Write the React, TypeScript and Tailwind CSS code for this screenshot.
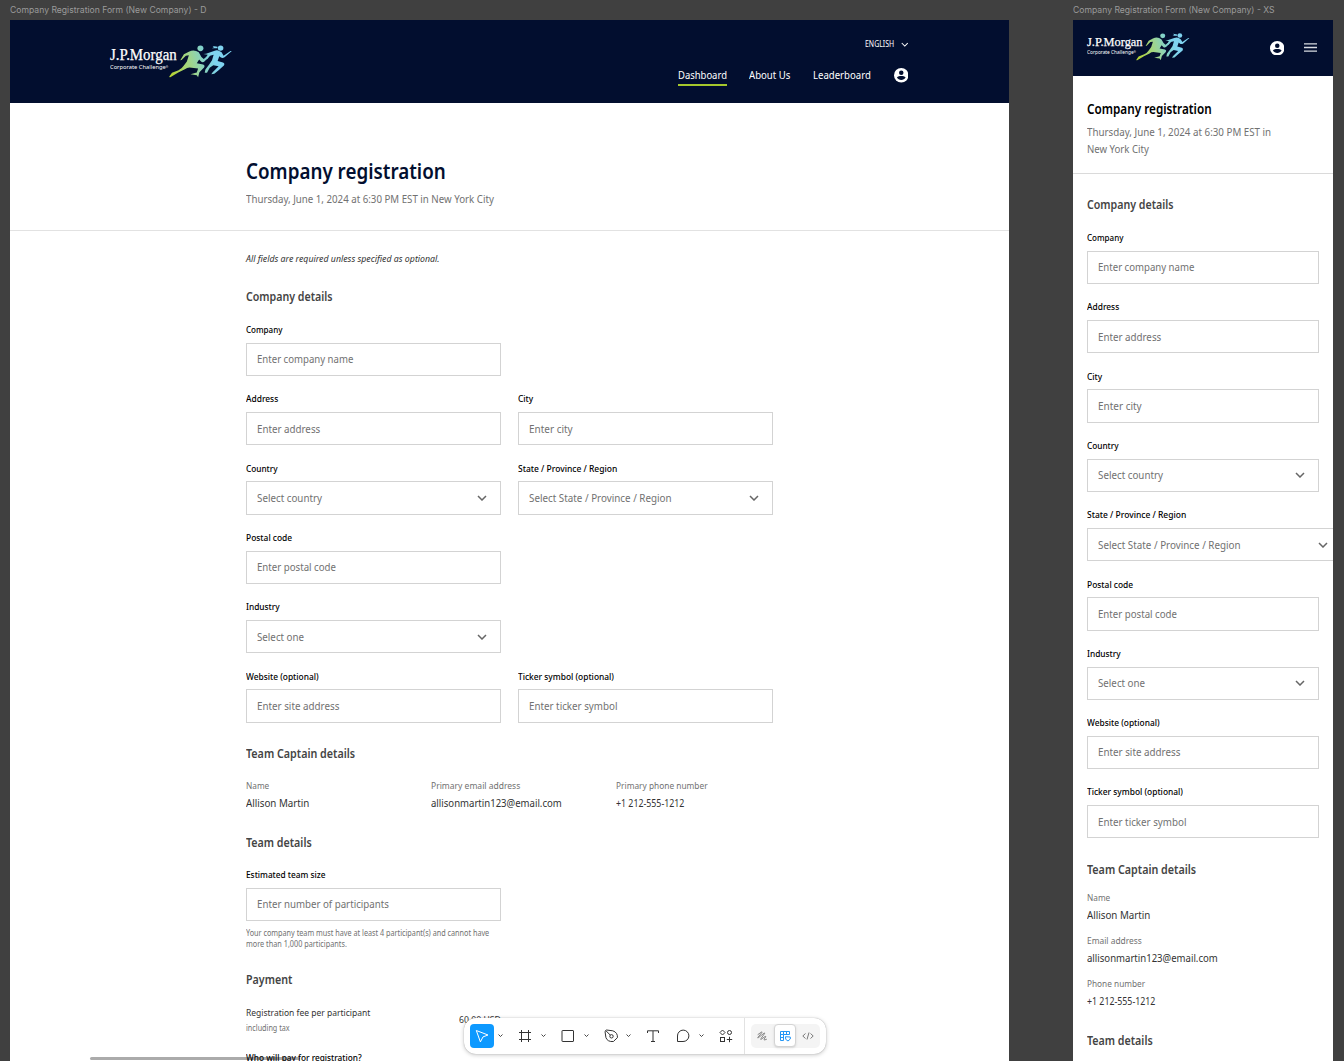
import { useLayoutEffect, useRef, useState } from "react";
import type { ReactNode } from "react";

/** One line of text, scaled horizontally so that it fills `w` pixels. */
function Fit({ w, className = "", children }: { w: number; className?: string; children: ReactNode }) {
  const ref = useRef<HTMLSpanElement>(null);
  const [scale, setScale] = useState(1);
  useLayoutEffect(() => {
    if (ref.current) setScale(w / ref.current.offsetWidth);
  }, [w]);
  return (
    <div className={`whitespace-nowrap ${className}`} style={{ width: w }}>
      <span ref={ref} className="inline-block origin-left" style={{ transform: `scaleX(${scale})` }}>
        {children}
      </span>
    </div>
  );
}

function Chevron({ className }: { className: string }) {
  return (
    <svg viewBox="0 0 10 6" fill="none" stroke="currentColor" className={className}>
      <path d="M1 1l4 4 4-4" />
    </svg>
  );
}

type FieldData = { label: string; lw: number; hint: string; hw: number; select?: boolean };

const company: FieldData = { label: "Company", lw: 36.5, hint: "Enter company name", hw: 96 };
const address: FieldData = { label: "Address", lw: 32, hint: "Enter address", hw: 63 };
const city: FieldData = { label: "City", lw: 15.5, hint: "Enter city", hw: 43.5 };
const country: FieldData = { label: "Country", lw: 31.5, hint: "Select country", hw: 65, select: true };
const region: FieldData = { label: "State / Province / Region", lw: 99, hint: "Select State / Province / Region", hw: 143, select: true };
const postal: FieldData = { label: "Postal code", lw: 46, hint: "Enter postal code", hw: 79 };
const industry: FieldData = { label: "Industry", lw: 33.5, hint: "Select one", hw: 47, select: true };
const website: FieldData = { label: "Website (optional)", lw: 72.5, hint: "Enter site address", hw: 82 };
const ticker: FieldData = { label: "Ticker symbol (optional)", lw: 96, hint: "Enter ticker symbol", hw: 88 };
const teamSize: FieldData = { label: "Estimated team size", lw: 79.5, hint: "Enter number of participants", hw: 131.5 };

function Field({ f, width = "w-[255px]" }: { f: FieldData; width?: string }) {
  return (
    <div className={`${width} shrink-0`}>
      <Fit w={f.lw} className="h-[14px] text-[9.7px] leading-[14px] font-medium text-black">{f.label}</Fit>
      <div className="mt-[5.67px] flex h-[33.33px] items-center justify-between border border-[#d3d3d3] pr-[13px] pl-[10px]">
        <Fit w={f.hw} className="text-[11px] leading-4 text-[#717171]">{f.hint}</Fit>
        {f.select && <Chevron className="h-[6px] w-[10px] stroke-[1.5] text-[#666]" />}
      </div>
    </div>
  );
}

function Heading({ w, className = "", children }: { w: number; className?: string; children: ReactNode }) {
  return <Fit w={w} className={`h-4 text-[12.3px] leading-4 font-semibold text-[#444] ${className}`}>{children}</Fit>;
}

function Detail({ label, lw, value, vw, className = "" }: { label: string; lw: number; value: string; vw: number; className?: string }) {
  return (
    <div className={className}>
      <Fit w={lw} className="h-4 text-[9.7px] leading-4 text-[#717171]">{label}</Fit>
      <Fit w={vw} className="mt-px h-4 text-[11px] leading-4 text-[#333]">{value}</Fit>
    </div>
  );
}

function Runners({ id, className }: { id: string; className: string }) {
  return (
    <svg viewBox="0 0 192 98" className={className}>
      <defs>
        <linearGradient id={id} gradientUnits="userSpaceOnUse" x1="5" y1="80" x2="170" y2="30">
          <stop offset="0" stopColor="#b5d334" />
          <stop offset="0.4" stopColor="#9ed590" />
          <stop offset="0.65" stopColor="#80d2cf" />
          <stop offset="0.8" stopColor="#7fd3f0" />
          <stop offset="1" stopColor="#7fd3f0" />
        </linearGradient>
      </defs>
      <g fill={`url(#${id})`}>
        <ellipse cx="95" cy="10" rx="9" ry="8.5" />
        <path d="M60 20Q72 14 82 18L90 22 98 36 105 42 122 28 125 30 108 49Q102 54 97 50L91 44 84 55 103 59Q110 62 106 68L92 82 88 97 84 91 65 88 84 83 88 71 62 68Q54 68 48 73L28 83 4 97Q0 98 1 95L9 84 29 76Q40 70 45 62L54 50 60 31 51 32 38 45 34 46 45 28Z" />
        <ellipse cx="156" cy="9" rx="8.5" ry="8" />
        <path d="M147 5l-15-2 4 4-6 3 16 0z" />
        <path d="M112 26L136 18Q146 14 152 18L159 22 165 32 186 18 190 18 168 37Q162 41 157 38L152 34 147 48 163 53Q170 56 166 62L150 76 137 87 128 88 132 82 150 64 134 61 123 69 115 84 108 84 110 74 122 58 130 46 135 29 124 32 116 42 108 45 117 29 104 27Z" />
      </g>
    </svg>
  );
}

function Logo({ small = false }: { small?: boolean }) {
  return (
    <div className="flex items-start">
      <div className="text-white">
        <Fit w={small ? 56 : 67} className={small ? "h-[14px] font-['Liberation_Serif'] text-[13.5px] leading-[15px] [-webkit-text-stroke:0.25px_white]" : "h-[17px] font-['Liberation_Serif'] text-[16px] leading-[18px] [-webkit-text-stroke:0.25px_white]"}>
          J.P.Morgan
        </Fit>
        <Fit w={small ? 49 : 58.5} className={small ? "h-2 text-[5px] leading-2" : "h-2 text-[6px] leading-2"}>
          Corporate Challenge<span className="relative -top-[1px] text-[3px]">®</span>
        </Fit>
      </div>
      {small ? <Runners id="runS" className="-mt-[1px] -ml-[6.5px] h-[27.5px] w-[54px]" /> : <Runners id="runL" className="-mt-[1px] -ml-[8px] h-[32.5px] w-[63.5px]" />}
    </div>
  );
}

function Avatar() {
  return (
    <svg viewBox="0 0 20 20" className="size-[14.5px] shrink-0">
      <circle cx="10" cy="10" r="10" fill="#fff" />
      <circle cx="10" cy="6.4" r="3.1" fill="#020e2f" />
      <path d="M4 13.2C5.2 11.6 7.8 11 10 11s4.8.6 6 2.2C14.8 15.3 12.5 16.7 10 16.7S5.2 15.3 4 13.2z" fill="#020e2f" />
    </svg>
  );
}

function Desktop() {
  return (
    <section className="w-[999px] shrink-0">
      <Fit w={196.5} className="h-5 font-['Inter'] text-[8.5px] leading-5 text-[#9b9b9b]">Company Registration Form (New Company) - D</Fit>
      <div className="h-[1041px] overflow-hidden bg-white">
        <header className="flex h-[82.7px] justify-between bg-[#020e2f] pr-[101px] pl-[100px] text-white">
          <div className="pt-[26px]"><Logo /></div>
          <div className="flex flex-col items-end">
            <div className="mt-[16px] flex h-4 items-center gap-[6px]">
              <Fit w={29.5} className="text-[8px] leading-4">ENGLISH</Fit>
              <Chevron className="h-[5px] w-[7.5px] stroke-[1.4]" />
            </div>
            <nav className="mt-[15px] flex h-[19px] text-[11px] leading-4">
              <Fit w={49} className="mr-[22.5px] h-[19px] border-b-2 border-[#a5c72d]">Dashboard</Fit>
              <Fit w={41} className="mr-[22.5px]">About Us</Fit>
              <Fit w={57.5} className="mr-[23.5px]">Leaderboard</Fit>
              <div className="pt-[1px]"><Avatar /></div>
            </nav>
          </div>
        </header>
        <div className="border-b border-[#e2e2e2] pt-[53.8px] pb-[23px] pl-[236px]">
          <Fit w={200} className="h-7 text-[22px] leading-7 font-semibold text-[#020e2f]">Company registration</Fit>
          <Fit w={248} className="mt-[6.5px] h-4 text-[11px] leading-4 text-[#717171]">Thursday, June 1, 2024 at 6:30 PM EST in New York City</Fit>
        </div>
        <div className="pl-[236px]">
          <Fit w={194} className="mt-5 h-4 text-[9.7px] leading-4 text-[#333] italic">All fields are required unless specified as optional.</Fit>
          <Heading w={86.5} className="mt-[22.5px]">Company details</Heading>
          <div className="mt-[17.7px] flex flex-col gap-[16.33px]">
            <Field f={company} />
            <div className="flex gap-[17px]"><Field f={address} /><Field f={city} /></div>
            <div className="flex gap-[17px]"><Field f={country} /><Field f={region} /></div>
            <Field f={postal} />
            <Field f={industry} />
            <div className="flex gap-[17px]"><Field f={website} /><Field f={ticker} /></div>
          </div>
          <Heading w={109} className="mt-[23.2px]">Team Captain details</Heading>
          <div className="mt-[16px] flex">
            <Detail className="w-[185px]" label="Name" lw={23} value="Allison Martin" vw={63} />
            <Detail className="w-[185px]" label="Primary email address" lw={89.5} value="allisonmartin123@email.com" vw={130.5} />
            <Detail label="Primary phone number" lw={92} value="+1 212-555-1212" vw={68} />
          </div>
          <Heading w={66} className="mt-[23.6px] mb-[17.5px]">Team details</Heading>
          <Field f={teamSize} />
          <div className="mt-[6px] text-[8.3px] leading-[11px] text-[#717171]">
            <Fit w={243.5} className="h-[11px]">Your company team must have at least 4 participant(s) and cannot have</Fit>
            <Fit w={101} className="h-[11px]">more than 1,000 participants.</Fit>
          </div>
          <Heading w={46} className="mt-[23.2px]">Payment</Heading>
          <div className="mt-[17.2px] flex">
            <div className="w-[213px]">
              <Fit w={124.5} className="h-4 text-[9.7px] leading-4 text-[#333]">Registration fee per participant</Fit>
              <Fit w={43.5} className="-mt-px h-4 text-[8.3px] leading-4 text-[#717171]">including tax</Fit>
            </div>
            <Fit w={42} className="mt-[7px] h-4 text-[9.7px] leading-4 text-[#333]">60.00 USD</Fit>
          </div>
          <Fit w={116} className="mt-[14px] h-4 text-[9.7px] leading-4 font-medium text-black">Who will pay for registration?</Fit>
        </div>
      </div>
    </section>
  );
}

function Mobile() {
  return (
    <section className="ml-[63.7px] w-[260px] shrink-0">
      <Fit w={201.5} className="h-5 font-['Inter'] text-[8.5px] leading-5 text-[#9b9b9b]">Company Registration Form (New Company) - XS</Fit>
      <div className="h-[1041px] overflow-hidden bg-white">
        <header className="flex h-[55.5px] justify-between bg-[#020e2f] pr-[15.5px] pl-[14px]">
          <div className="pt-[14px]"><Logo small /></div>
          <div className="flex items-center gap-[20px]">
            <Avatar />
            <svg viewBox="0 0 13 9" className="h-[9px] w-[13px]" stroke="#d8dbe2" strokeWidth="1.4">
              <path d="M0 .9h13M0 4.5h13M0 8.1h13" />
            </svg>
          </div>
        </header>
        <div className="border-b border-[#dadada] pt-[23px] pb-[15.9px] pl-[14px]">
          <Fit w={125} className="h-5 text-[13.8px] leading-5 font-semibold text-black">Company registration</Fit>
          <div className="mt-[4.6px] text-[11px] leading-[17px] text-[#717171]">
            <Fit w={184} className="h-[17px]">Thursday, June 1, 2024 at 6:30 PM EST in</Fit>
            <Fit w={62} className="h-[17px]">New York City</Fit>
          </div>
        </div>
        <div className="pl-[14px]">
          <Heading w={86.5} className="mt-[23px]">Company details</Heading>
          <div className="mt-[18px] flex flex-col gap-[16.33px]">
            {[company, address, city, country, region, postal, industry, website, ticker].map((f) => (
              <Field key={f.label} f={f} width={f === region ? "w-[255px]" : "w-[232px]"} />
            ))}
          </div>
          <Heading w={109} className="mt-[23.6px] mb-[12px]">Team Captain details</Heading>
          <div className="flex flex-col gap-[10px]">
            <Detail label="Name" lw={23} value="Allison Martin" vw={63} />
            <Detail label="Email address" lw={54.5} value="allisonmartin123@email.com" vw={130.5} />
            <Detail label="Phone number" lw={58} value="+1 212-555-1212" vw={68} />
          </div>
          <Heading w={66} className="mt-[24px]">Team details</Heading>
        </div>
      </div>
    </section>
  );
}

function Tool({ children, className }: { children: ReactNode; className: string }) {
  return (
    <div className={`flex items-center ${className}`}>
      <svg viewBox="0 0 16 16" fill="none" stroke="currentColor" className="size-4 shrink-0">{children}</svg>
    </div>
  );
}

function Toolbar() {
  const caret = "h-[3px] w-[5px] stroke-[1.8] shrink-0";
  return (
    <div className="absolute top-[1017.5px] left-[463.5px] flex h-[36.5px] w-[362.5px] items-center rounded-xl bg-white pl-[6.5px] text-[#333] shadow-[0_0_1px_rgba(0,0,0,0.35),0_1px_4px_rgba(0,0,0,0.22)]">
      <div className="flex size-6 shrink-0 items-center justify-center rounded bg-[#0d99ff] text-white">
        <svg viewBox="0 0 16 16" fill="none" stroke="currentColor" strokeLinejoin="round" className="size-4">
          <path d="M2.3 2.5l11.7 4.5-5 1.9-2.6 5z" />
        </svg>
      </div>
      <Chevron className={`${caret} ml-[4px]`} />
      <Tool className="ml-[14px]"><path d="M4.5 2v12M11.5 2v12M2 4.5h12M2 11.5h12" /></Tool>
      <Chevron className={`${caret} ml-[8px]`} />
      <Tool className="ml-[14px]"><rect x="2" y="2.5" width="11.5" height="11" rx=".5" /></Tool>
      <Chevron className={`${caret} ml-[8px]`} />
      <Tool className="ml-[13.5px]">
        <path d="M2 3.3L3.5 2l6.3.8c3.3 1 5 3.7 4.6 6.9l-4 3.8C6.5 14 3.7 12.3 2.9 9.5z" strokeLinejoin="round" />
        <circle cx="8.5" cy="8.3" r="1.7" />
        <path d="M2.8 2.6L7.3 7.1" />
      </Tool>
      <Chevron className={`${caret} ml-[7px]`} />
      <Tool className="ml-[14px]"><path d="M2.5 5V2.8h11V5M8 3v10.5M6 13.5h4" /></Tool>
      <Tool className="ml-[14px]"><path d="M2.5 13.5V8A5.7 5.7 0 1 1 8 13.5z" strokeLinejoin="round" /></Tool>
      <Chevron className={`${caret} ml-[8px]`} />
      <Tool className="ml-[14px]">
        <path d="M4.5 2l2.5 2.5L4.5 7 2 4.5z" />
        <circle cx="11.5" cy="4.5" r="2" />
        <rect x="2.5" y="9.5" width="4" height="4" />
        <path d="M11.5 8.8v5.4M8.8 11.5h5.4" />
      </Tool>
      <div className="ml-[10px] h-full w-px shrink-0 bg-[#e2e2e2]" />
      <div className="ml-[6.3px] flex h-6 w-[69px] items-center rounded-[5px] bg-[#f4f4f4] text-[#7a7a7a]">
        <div className="flex w-[23px] justify-center">
          <svg viewBox="0 0 12 12" fill="none" stroke="currentColor" strokeLinecap="round" strokeLinejoin="round" strokeWidth=".9" className="size-[12px]">
            <path d="M2 4.5L5.5 2q1-.4.3.7L2 7.200q-.8 1.200.5.4L8 3.200q1.200-.7.5.5L5 8.500q-.8 1.500.5.600L9 6.500q1.200-.6.600.5l-1.400 2q-.6 1.200.6.900l1.700-.6" />
          </svg>
        </div>
        <div className="flex h-[23px] w-[22px] items-center justify-center rounded-[4px] border border-[#d4d4d4] bg-white text-[#2496f5] shadow-sm">
          <svg viewBox="0 0 12 12" fill="none" stroke="currentColor" strokeWidth="1" className="size-[12px] shrink-0">
            <path d="M4.500 10.500h-3v-9h9v3h-6zM4.500 1.500v3M7.500 1.500v3M1.500 4.500h3M1.500 7.500h3" />
            <path d="M6.500 6.700l4.800.3v2l-2.300 2-2.300-1.700z" strokeLinejoin="round" />
          </svg>
        </div>
        <div className="flex w-6 justify-center">
          <svg viewBox="0 0 12 10" fill="none" stroke="currentColor" className="h-[10px] w-3">
            <path d="M3.500 2.500L.8 5l2.700 2.500M8.500 2.500L11.200 5 8.500 7.500M7 1.500L5 8.500" />
          </svg>
        </div>
      </div>
    </div>
  );
}

export default function App() {
  return (
    <div className="relative flex h-[1061px] w-[1344px] overflow-hidden bg-[#404040] pl-[10px] font-['Noto_Sans',sans-serif] [font-stretch:80%]">
      <Desktop />
      <Mobile />
      <div className="absolute top-[1057px] left-[90px] h-[3px] w-[210px] rounded-full bg-black/33" />
      <Toolbar />
    </div>
  );
}
